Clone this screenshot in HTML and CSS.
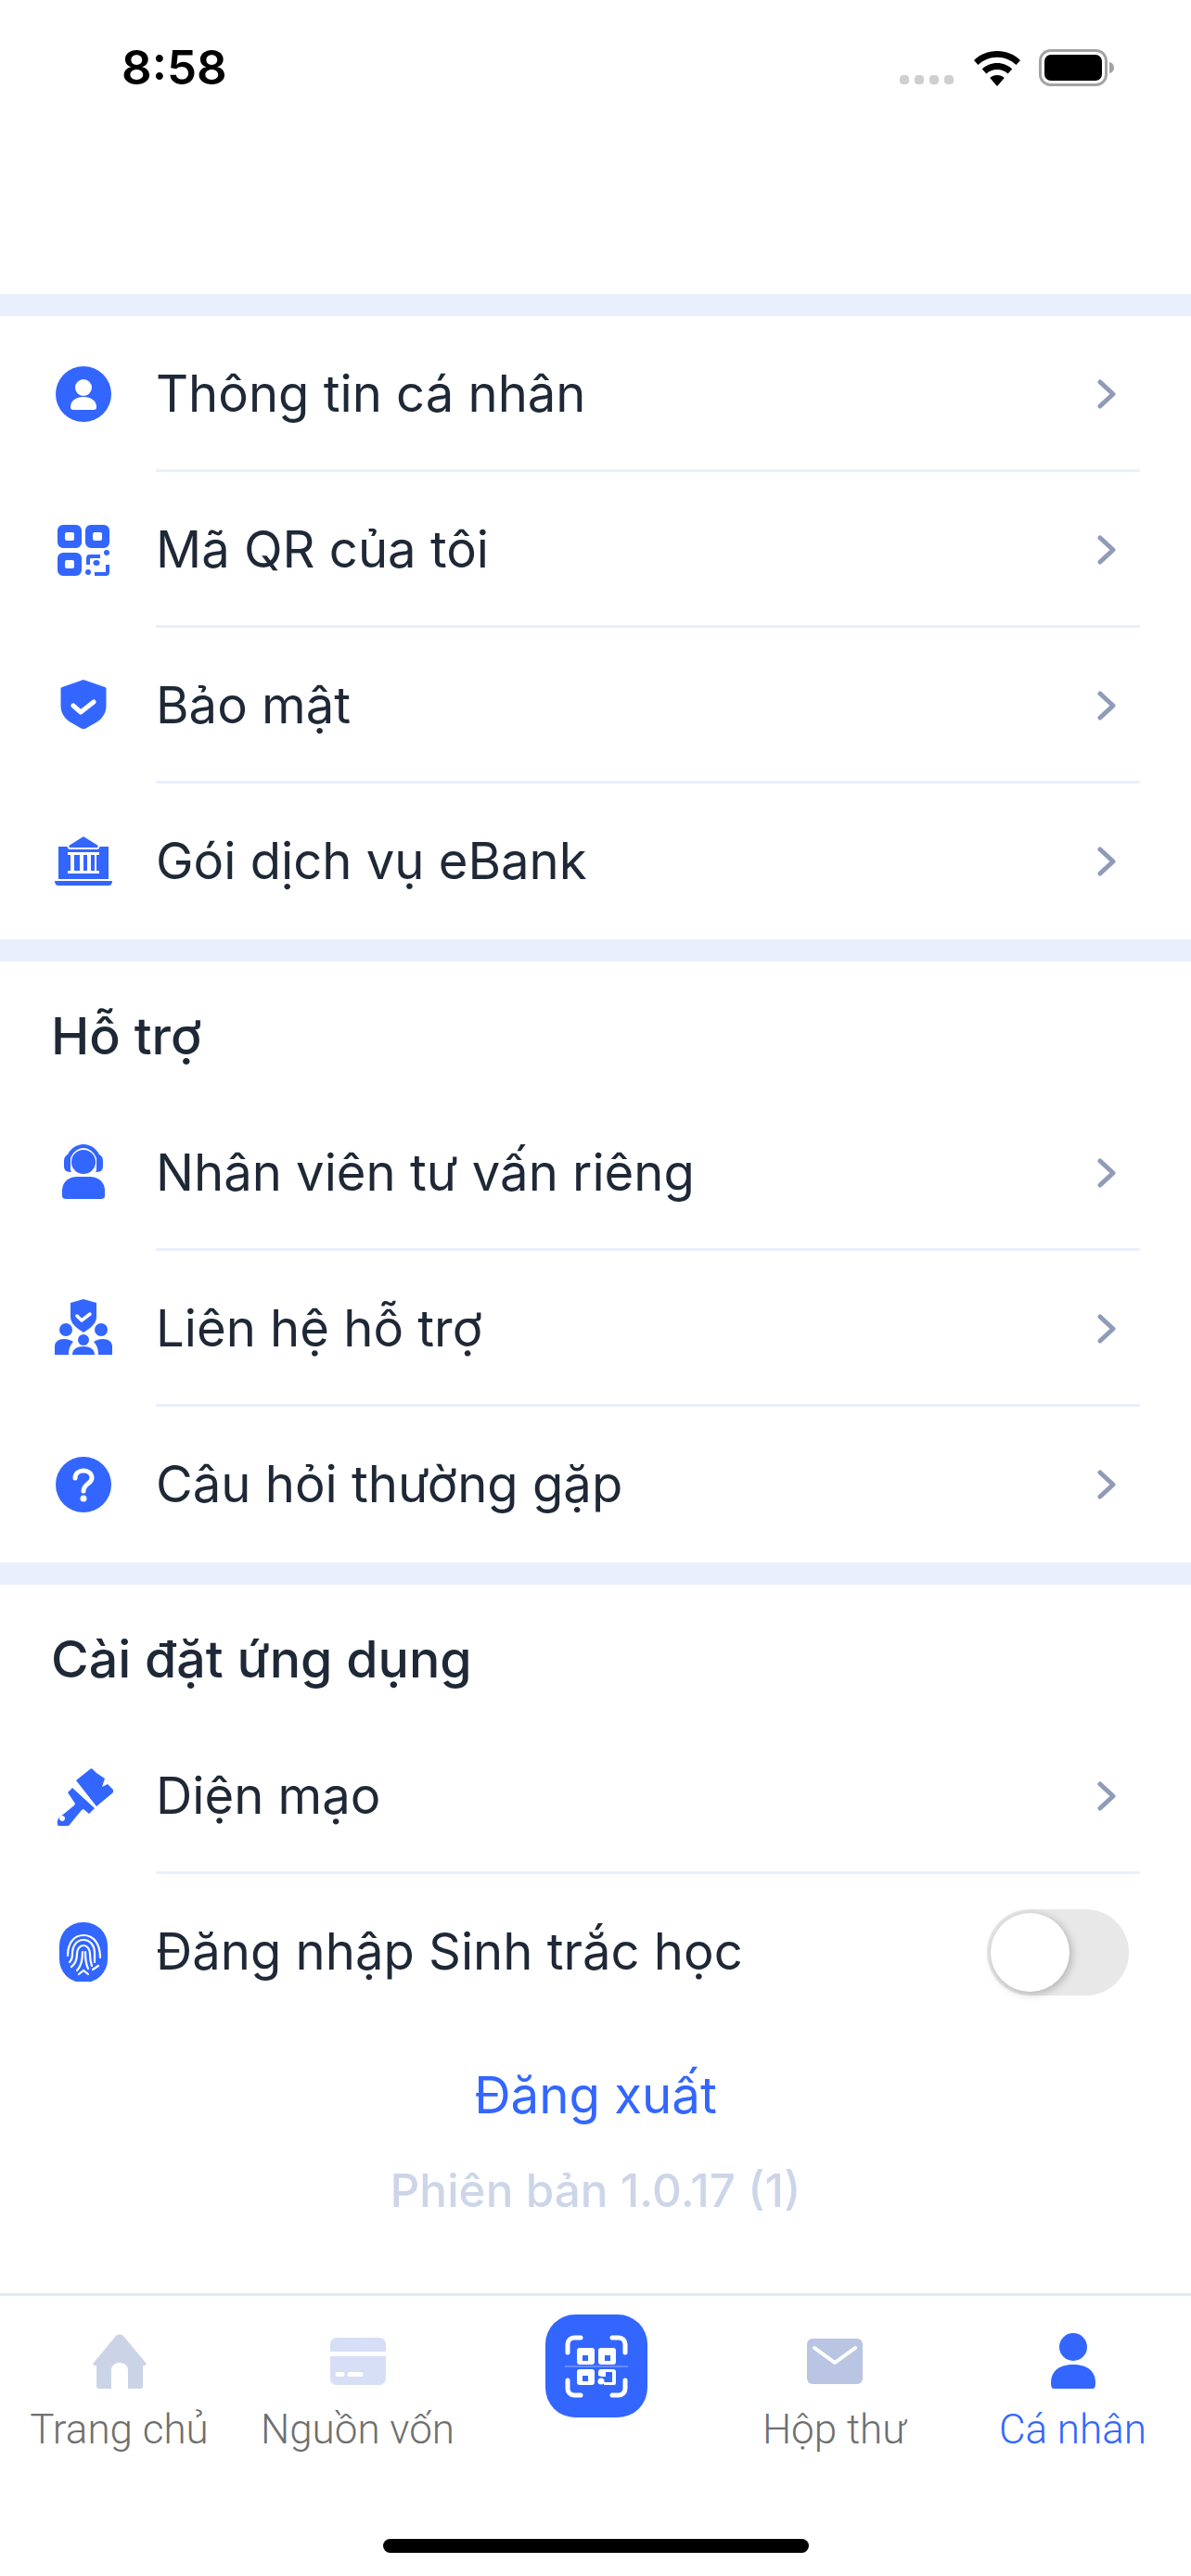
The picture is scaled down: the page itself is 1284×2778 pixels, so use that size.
FILE: index.html
```html
<!DOCTYPE html>
<html lang="vi">
<head>
    <meta charset="UTF-8">
    <meta name="viewport" content="width=device-width, initial-scale=1.0">
    <title>Cá nhân</title>
    <link rel="stylesheet" href="styles.css">
</head>
<body>
    <div class="phone">
        <div class="status-bar">
            <span class="time">8:58</span>
            <div class="status-icons">
                <svg class="signal" width="60" height="12" viewBox="0 0 60 12"><rect x="0" y="1" width="10" height="10" rx="4"/><rect x="16" y="1" width="10" height="10" rx="4"/><rect x="32" y="1" width="10" height="10" rx="4"/><rect x="48" y="1" width="10" height="10" rx="4"/></svg>
                <svg class="wifi" width="52" height="38" viewBox="0 0 52 38"><path d="M26 0C16 0 7.500 3.800 1 10l4.500 5C10.800 10 18 6.800 26 6.800S41.200 10 46.500 15L51 10C44.500 3.800 36 0 26 0z"/><path d="M26 13c-6.400 0-12 2.500-16.200 6.400l4.600 5C17.400 21.700 21.500 20 26 20s8.600 1.700 11.600 4.400l4.600-5C38 15.500 32.400 13 26 13z"/><path d="M26 26c-3 0-5.800 1.100-7.800 3L26 38l7.800-9c-2-1.900-4.800-3-7.800-3z"/></svg>
                <svg class="battery" width="83" height="40" viewBox="0 0 83 40"><rect x="1.500" y="1.500" width="71" height="37" rx="11" fill="none" stroke="#a3a3a3" stroke-width="3"/><rect x="6" y="6" width="62" height="28" rx="7" fill="#000"/><path d="M76 14c3 .5 5 3 5 6s-2 5.500-5 6z" fill="#a3a3a3"/></svg>
            </div>
        </div>

        <div class="band"></div>
        <section class="group">
            <a class="row">
                <svg class="icon" viewBox="0 0 64 64"><circle cx="32" cy="32" r="30"/><circle cx="32" cy="25" r="9" fill="#fff"/><path d="M18 46c0-7 6-11 14-11s14 4 14 11c0 2-1 3-3 3H21c-2 0-3-1-3-3z" fill="#fff"/></svg>
                <span class="label">Thông tin cá nhân</span>
                <svg class="chevron" width="24" height="32" viewBox="0 0 24 32"><path d="M5 3l14 13L5 29"/></svg>
            </a>
            <a class="row">
                <svg class="icon" viewBox="0 0 64 64"><path fill-rule="evenodd" d="M10 5h14a6 6 0 0 1 6 6v13a6 6 0 0 1-6 6H10a6 6 0 0 1-6-6V11a6 6 0 0 1 6-6zm4 8a2 2 0 0 0-2 2v5a2 2 0 0 0 2 2h6a2 2 0 0 0 2-2v-5a2 2 0 0 0-2-2zM40 5h14a6 6 0 0 1 6 6v13a6 6 0 0 1-6 6H40a6 6 0 0 1-6-6V11a6 6 0 0 1 6-6zm4 8a2 2 0 0 0-2 2v5a2 2 0 0 0 2 2h6a2 2 0 0 0 2-2v-5a2 2 0 0 0-2-2zM10 35h14a6 6 0 0 1 6 6v13a6 6 0 0 1-6 6H10a6 6 0 0 1-6-6V41a6 6 0 0 1 6-6zm4 8a2 2 0 0 0-2 2v5a2 2 0 0 0 2 2h6a2 2 0 0 0 2-2v-5a2 2 0 0 0-2-2z"/><circle cx="57" cy="35" r="3"/><circle cx="37" cy="56" r="3"/><ellipse cx="46" cy="46" rx="3.500" ry="3"/><path d="M35 48v-7a4 4 0 0 1 4-4h11v4H40a1 1 0 0 0-1 1v6zM44 56h11a1 1 0 0 0 1-1v-7h4v8a4 4 0 0 1-4 4H44z"/></svg>
                <span class="label">Mã QR của tôi</span>
                <svg class="chevron" width="24" height="32" viewBox="0 0 24 32"><path d="M5 3l14 13L5 29"/></svg>
            </a>
            <a class="row">
                <svg class="icon" viewBox="0 0 64 64"><path d="M32 4l23 8c1 .4 1.500 1 1.500 2v18c0 8-4 13-9 17l-13 7.500c-1.500.8-3.500.8-5 0L16.500 49c-5-4-9-9-9-17V14c0-1 .5-1.600 1.500-2z"/><path d="M21 32l8 7 14-11" fill="none" stroke="#fff" stroke-width="5" stroke-linecap="round" stroke-linejoin="round"/></svg>
                <span class="label">Bảo mật</span>
                <svg class="chevron" width="24" height="32" viewBox="0 0 24 32"><path d="M5 3l14 13L5 29"/></svg>
            </a>
            <a class="row">
                <svg class="icon" viewBox="0 0 64 64"><path d="M1 53h62c0 3-1.500 5-4 5H5c-2.500 0-4-2-4-5z"/><path fill-rule="evenodd" d="M5 16h54v35H5zM15 42v3h34v-3h-3V25h3v-3H15v3h3v17zm7-17h6v17h-6zm10 0h4v17h-4zm8 0h4v17h-4z"/><path d="M32 4L48 14c1 1 .5 4-1 4H17c-1.500 0-2-3-1-4z" stroke="#fff" stroke-width="2"/></svg>
                <span class="label">Gói dịch vụ eBank</span>
                <svg class="chevron" width="24" height="32" viewBox="0 0 24 32"><path d="M5 3l14 13L5 29"/></svg>
            </a>
        </section>

        <div class="band"></div>
        <section class="group">
            <h3 class="group-title">Hỗ trợ</h3>
            <a class="row">
                <svg class="icon" viewBox="0 0 64 64"><circle cx="32" cy="20" r="13"/><path d="M11 19c0-4 2-6 4-7C18 6 24 1 32 1s14 5 17 11c2 1 4 3 4 7v6c0 3-2 6-7 6h-1l1-2V16C43 9 38 5 32 5S21 9 18 16v13l1 2h-1c-5 0-7-3-7-6z"/><path d="M9 51c0-9 7-15 16-15h14c9 0 16 6 16 15v6c0 2-2 3-4 3H13c-2 0-4-1-4-3z"/></svg>
                <span class="label">Nhân viên tư vấn riêng</span>
                <svg class="chevron" width="24" height="32" viewBox="0 0 24 32"><path d="M5 3l14 13L5 29"/></svg>
            </a>
            <a class="row">
                <svg class="icon" viewBox="0 0 64 64"><path d="M32 0l14 4v15c0 7-6 12-14 17-8-5-14-10-14-17V4z"/><path d="M25 18l5 5 9-7" fill="none" stroke="#fff" stroke-width="3.500" stroke-linecap="round" stroke-linejoin="round"/><circle cx="13" cy="33" r="7"/><circle cx="51" cy="33" r="7"/><circle cx="32" cy="44" r="6"/><path d="M1 60V51c0-5 4-8 10-8 4 0 7 1 10 3-3 3-5 7-5 14zM63 60V51c0-5-4-8-10-8-4 0-7 1-10 3 3 3 5 7 5 14zM20 60c0-6 5-9 12-9s12 3 12 9z"/></svg>
                <span class="label">Liên hệ hỗ trợ</span>
                <svg class="chevron" width="24" height="32" viewBox="0 0 24 32"><path d="M5 3l14 13L5 29"/></svg>
            </a>
            <a class="row">
                <svg class="icon" viewBox="0 0 64 64"><circle cx="32" cy="32" r="30"/><path d="M23 25c0-5 4-8 9-8s9 3 9 8c0 6-9 6-9 14" fill="none" stroke="#fff" stroke-width="5" stroke-linecap="round"/><circle cx="32" cy="47" r="3.500" fill="#fff"/></svg>
                <span class="label">Câu hỏi thường gặp</span>
                <svg class="chevron" width="24" height="32" viewBox="0 0 24 32"><path d="M5 3l14 13L5 29"/></svg>
            </a>
        </section>

        <div class="band"></div>
        <section class="group">
            <h3 class="group-title">Cài đặt ứng dụng</h3>
            <a class="row">
                <svg class="icon" viewBox="0 0 64 64"><path d="M24 15L39 3c1-1 2-1 3 0l4 4 9 6-3 9 6-3 6 6c.5 1 .5 2 0 3L46 43z"/><path fill-rule="evenodd" d="M15 28l5-5 24 22-6 6-6-5-2 1-14 17c-3 3-8 3-10 1-3-2-3-7 0-10l16-13 1-2zM9 53a3 3 0 1 0 .1 0z"/></svg>
                <span class="label">Diện mạo</span>
                <svg class="chevron" width="24" height="32" viewBox="0 0 24 32"><path d="M5 3l14 13L5 29"/></svg>
            </a>
            <div class="row">
                <svg class="icon" viewBox="0 0 64 64"><rect x="6" y="0" width="52" height="65" rx="25"/><g fill="none" stroke="#fff" stroke-width="2.200" stroke-linecap="round"><path d="M15 36C15 22 22 14 32 14S50 22 50 38"/><path d="M17 43c2-2 3-4 3-9C20 25 25 19 32 19s12 6 12 14v10"/><path d="M19 48c4-3 6-7 6-14 0-5 3-9 7-9s7 4 7 9c0 6 1 10 2 13"/><path d="M25 52c4-4 6-10 6-20M34 32c0 8 1 14 3 18"/><path d="M27 56l5-4 5 4M42 51l6-4"/></g></svg>
                <span class="label">Đăng nhập Sinh trắc học</span>
                <div class="toggle"><span class="toggle-thumb"></span></div>
            </div>
        </section>

        <div class="logout">Đăng xuất</div>
        <div class="version">Phiên bản 1.0.17 (1)</div>

        <nav class="tab-bar">
            <div class="tab">
                <svg class="tab-icon" viewBox="0 0 64 64" fill="#cbd4e7"><path d="M28 5c2-2 6-2 8 0l24 29c1 1 .5 3-1 3h-2v22c0 2-1 3-3 3H41V42c0-5-4-8-9-8s-9 3-9 8v20H10c-2 0-3-1-3-3V37H5c-1.500 0-2-2-1-3z"/></svg>
                <span class="tab-label">Trang chủ</span>
            </div>
            <div class="tab">
                <svg class="tab-icon" viewBox="0 0 64 64" fill="#d6dff6"><path d="M9 7h46c4 0 7 3 7 7v8H2v-8c0-4 3-7 7-7z"/><path fill-rule="evenodd" d="M2 27h60v24c0 4-3 7-7 7H9c-4 0-7-3-7-7zm8 17a2.500 2.500 0 0 0 0 5h5a2.500 2.500 0 0 0 0-5zm13 0a2.500 2.500 0 0 0 0 5h12a2.500 2.500 0 0 0 0-5z"/></svg>
                <span class="tab-label">Nguồn vốn</span>
            </div>
            <div class="tab">
                <div class="scan-btn">
                    <svg width="68" height="68" viewBox="0 0 68 68"><g fill="none" stroke="#fff" stroke-width="5" stroke-linecap="round"><path d="M17 3H10a7 7 0 0 0-7 7v9M51 3h7a7 7 0 0 1 7 7v9M17 65H10a7 7 0 0 1-7-7v-9M51 65h7a7 7 0 0 0 7-7v-9"/></g><path d="M0 34h68" stroke="#fff" stroke-width="1" opacity=".5"/><path fill="#fff" fill-rule="evenodd" d="M16 14h13a3 3 0 0 1 3 3v12a3 3 0 0 1-3 3H16a3 3 0 0 1-3-3V17a3 3 0 0 1 3-3zm3 8v6h6v-6zM39 14h13a3 3 0 0 1 3 3v12a3 3 0 0 1-3 3H39a3 3 0 0 1-3-3V17a3 3 0 0 1 3-3zm4 8v6h6v-6zM16 37h13a3 3 0 0 1 3 3v11a3 3 0 0 1-3 3H16a3 3 0 0 1-3-3V40a3 3 0 0 1 3-3zm3 7v6h6v-6z"/><path fill="#fff" d="M39 37h13a3 3 0 0 1 3 3v12a2 2 0 0 1-2 2H42v-3h9v-11h-7v5h-4l-4-1v-4a3 3 0 0 1 3-3z"/><circle cx="39" cy="50" r="3.500" fill="#fff"/></svg>
                </div>
            </div>
            <div class="tab">
                <svg class="tab-icon" viewBox="0 0 64 64" fill="#b9c5e2"><rect x="2" y="8" width="60" height="49" rx="6"/><path d="M10 18l22 16 22-16" fill="none" stroke="#fff" stroke-width="4" stroke-linecap="round" stroke-linejoin="round"/></svg>
                <span class="tab-label">Hộp thư</span>
            </div>
            <div class="tab tab-active">
                <svg class="tab-icon" viewBox="0 0 64 64" fill="#3366ff"><circle cx="32" cy="17" r="15"/><path d="M8 56c0-14 10-20 24-20s24 6 24 20c0 4-1 6-3 6H11c-2 0-3-2-3-6z"/></svg>
                <span class="tab-label">Cá nhân</span>
            </div>
        </nav>
        <div class="home-area"><span class="home-bar"></span></div>
    </div>
</body>
</html>
```

FILE: styles.css
```css
* {
    box-sizing: border-box;
}
body {
    font-family: Inter, "Noto Sans", sans-serif;
    background-color: #fff;
    margin: 0;
}
.phone {
    width: 1284px;
    height: 2778px;
    display: flex;
    flex-direction: column;
    color: #1f2836;
    overflow: hidden;
}
.status-bar {
    height: 317px;
    padding: 53px 81px 0 131px;
    display: flex;
    justify-content: space-between;
    align-items: flex-start;
}
.time {
    font-size: 51px;
    font-weight: 600;
    line-height: 40px;
    color: #000;
}
.status-icons {
    display: flex;
    align-items: flex-end;
    gap: 19px;
    height: 40px;
}
.signal {
    fill: #cfcfcf;
    margin-bottom: 1px;
}
.wifi {
    fill: #000;
}
.band {
    height: 24px;
    background-color: #e9effc;
}
.group-title {
    height: 144px;
    margin: 0;
    padding: 15px 0 0 55px;
    display: flex;
    align-items: center;
    font-size: 55.5px;
    font-weight: 500;
}
.row {
    height: 168px;
    display: flex;
    align-items: center;
    margin-right: 55px;
    padding-left: 58px;
    position: relative;
}
.row::after {
    content: "";
    position: absolute;
    left: 168px;
    right: 0;
    bottom: 0;
    height: 3px;
    background-color: #e9effc;
}
.row:last-child::after {
    display: none;
}
.icon {
    width: 64px;
    height: 64px;
    fill: #3366ff;
    flex-shrink: 0;
}
.label {
    margin-left: 46px;
    margin-bottom: 3px;
    font-size: 54.4px;
    flex: 1;
}
.chevron {
    fill: none;
    stroke: #8f9bb8;
    stroke-width: 5;
    stroke-linecap: round;
    stroke-linejoin: round;
    margin-right: 24px;
}
.toggle {
    width: 153px;
    height: 93px;
    margin-right: 12px;
    padding: 4px;
    border-radius: 47px;
    background-color: #e8e8e8;
}
.toggle-thumb {
    display: block;
    width: 85px;
    height: 85px;
    border-radius: 50%;
    background-color: #fff;
    box-shadow: 2px 2px 10px rgba(0, 0, 0, 0.25);
}
.logout {
    margin-top: 37px;
    text-align: center;
    font-size: 54.6px;
    line-height: 66px;
    color: #3366ff;
}
.version {
    margin-top: 37px;
    text-align: center;
    font-size: 49.5px;
    font-weight: 500;
    line-height: 66px;
    color: #cdd6e8;
}
.tab-bar {
    margin-top: 78px;
    height: 237px;
    border-top: 3px solid #e2e9f5;
    display: grid;
    grid-template-columns: repeat(5, 257px);
}
.tab {
    display: flex;
    flex-direction: column;
    align-items: center;
    padding-top: 38px;
    white-space: nowrap;
}
.tab-icon {
    width: 64px;
    height: 64px;
}
.tab-label {
    margin-top: 18px;
    font-family: Roboto, sans-serif;
    font-size: 44px;
    font-weight: 300;
    line-height: 48px;
    color: #6f6f6f;
}
.tab-active .tab-label {
    color: #3366ff;
}
.scan-btn {
    width: 110px;
    height: 111px;
    margin-top: -18px;
    border-radius: 32px;
    background-color: #3366ff;
    display: flex;
    align-items: center;
    justify-content: center;
}
.home-area {
    flex: 1;
    display: flex;
    justify-content: center;
}
.home-bar {
    width: 459px;
    height: 15px;
    margin-top: 28px;
    border-radius: 8px;
    background-color: #000;
}
```
